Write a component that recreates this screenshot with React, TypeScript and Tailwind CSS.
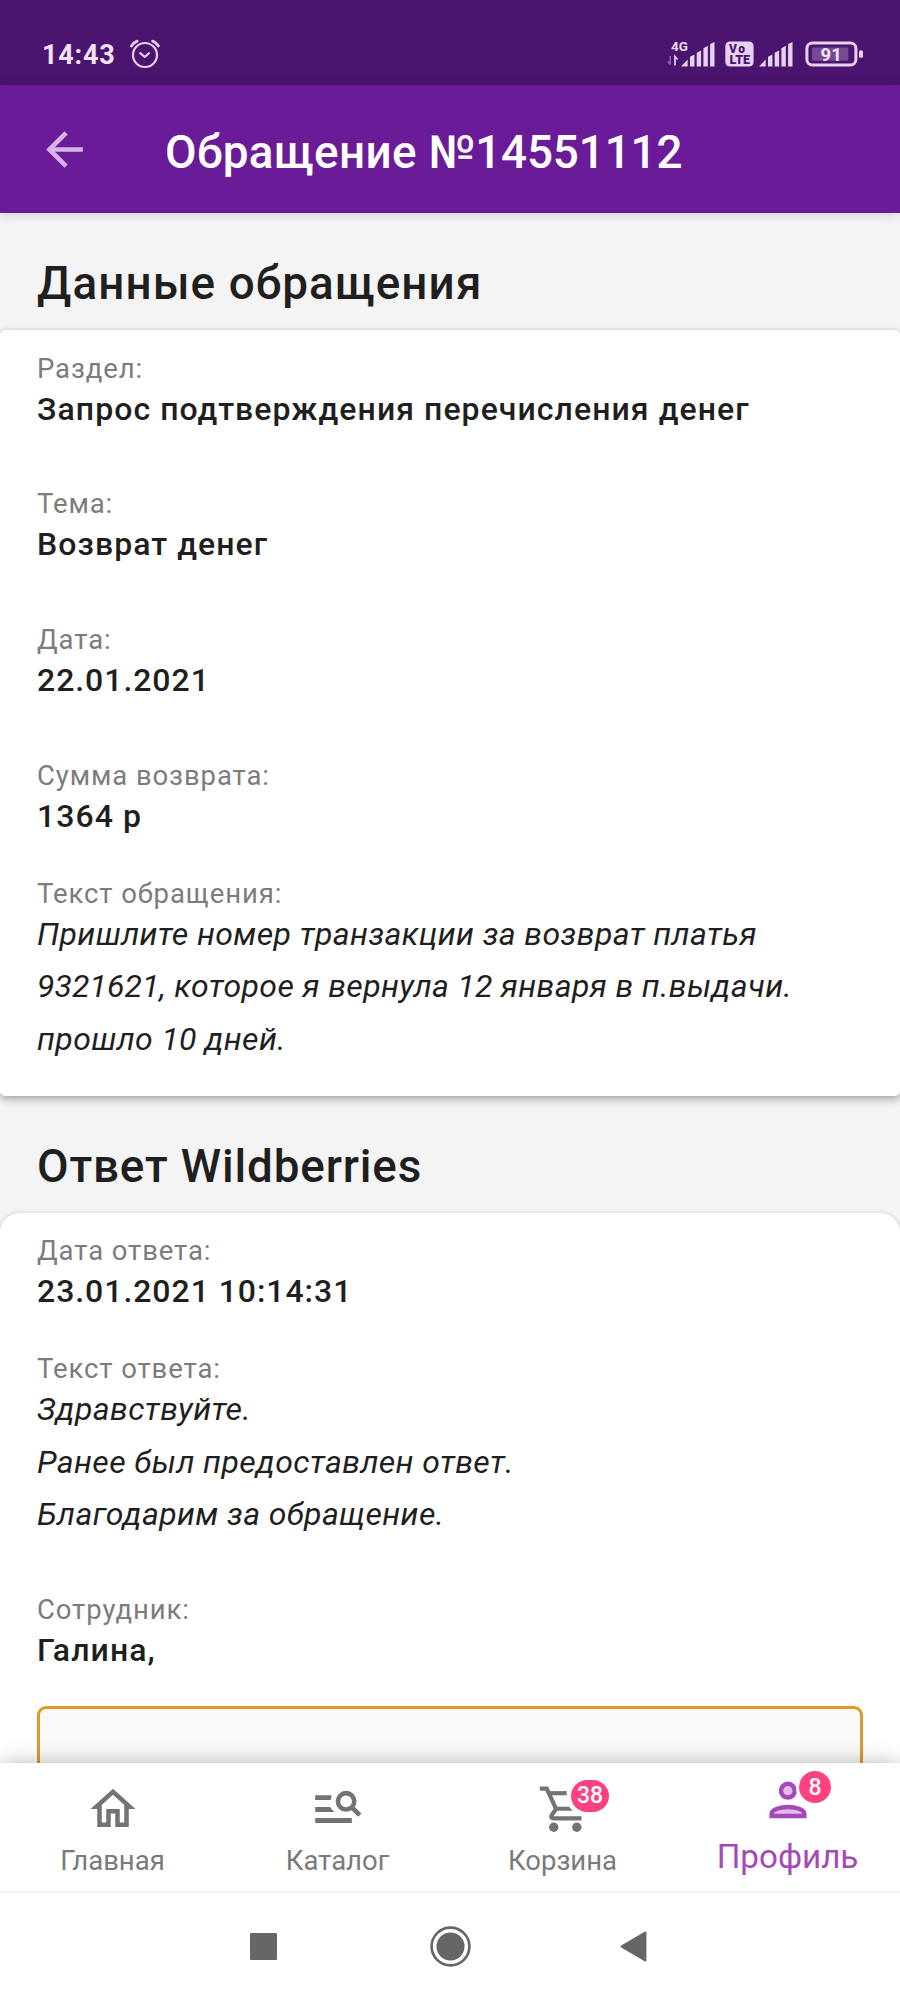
import type { ReactNode } from "react";

function SignalBars() {
  return (
    <g fill="#e6d2f0">
      <path d="M0 24.5 L6.7 17.5 V24.5 Z" />
      <path d="M9 24.5 V14.8 L13.4 12.6 V24.5 Z" />
      <path d="M15.7 24.5 V10.8 L20.1 8.4 V24.5 Z" />
      <path d="M22.4 24.5 V6.3 L26.8 3.8 V24.5 Z" />
      <path d="M29.1 24.5 V2 L33.5 0 V24.5 Z" />
    </g>
  );
}

function StatusBar() {
  return (
    <div className="flex h-[85px] shrink-0 items-end justify-between bg-[#4b146f] pr-[36px] pl-[42px]">
      <div className="flex h-[62px] items-center gap-[13px]">
        <span className="mt-px text-[27px] leading-[32px] font-bold tracking-[0.8px] text-[#f3e4fa]">14:43</span>
        <svg width="32" height="32" viewBox="0 0 32 32" fill="none" stroke="#e6cff2" strokeWidth="2.2" strokeLinecap="round" strokeLinejoin="round">
          <circle cx="16" cy="17" r="12" />
          <path d="M11.3 15.2 L15.7 19 L20 15.2" />
          <path d="M2.4 8 Q4.5 4.6 8.2 3.1 M29.4 8 Q27.4 4.6 23.6 3.1" strokeWidth="2.8" />
        </svg>
      </div>
      <div className="flex h-[62px] items-center">
        <svg width="48" height="36" viewBox="0 -4 48 36">
          <text x="4" y="10.5" fontSize="13.5" fontWeight="700" fill="#ecdaf5">4G</text>
          <path d="M3.2 16 V24.5 M3.2 24.5 L0.8 21.6" stroke="#8b62a8" strokeWidth="1.6" fill="none" />
          <path d="M8 25.5 V16.5 L10.6 19.5" stroke="#e6d2f0" strokeWidth="1.7" fill="none" />
          <g transform="translate(14 2)"><SignalBars /></g>
        </svg>
        <svg className="ml-[10px]" width="29" height="28" viewBox="0 0 29 28">
          <rect x="0.3" y="1.5" width="28.3" height="25" rx="4.5" fill="#e6d2f0" />
          <text x="4" y="12.6" fontSize="12" fontWeight="900" fill="#4b146f" textLength="16">Vo</text>
          <text x="4.6" y="23.6" fontSize="12" fontWeight="900" fill="#4b146f" textLength="20.5" lengthAdjust="spacingAndGlyphs">LTE</text>
        </svg>
        <svg className="ml-[5px]" width="34" height="28" viewBox="0 0 34 28">
          <g transform="translate(0 2)"><SignalBars /></g>
        </svg>
        <svg className="ml-[12px]" width="59" height="28" viewBox="0 0 59 28">
          <rect x="1.9" y="3" width="49" height="22" rx="5.5" fill="none" stroke="#e6d2f0" strokeWidth="3" />
          <rect x="7" y="7.4" width="36.3" height="13.4" rx="1" fill="#774a94" />
          <rect x="54" y="10.2" width="4" height="7.6" rx="1.6" fill="#e6d2f0" />
          <text x="26.2" y="20.8" fontSize="18.5" fontWeight="700" fill="#f3e4fa" textAnchor="middle">91</text>
        </svg>
      </div>
    </div>
  );
}

function AppBar() {
  return (
    <header className="relative z-10 flex h-[128px] shrink-0 items-center bg-[#6a1b98] pl-[37px] shadow-[0_1px_12px_rgba(0,0,0,0.16)]">
      <svg width="55" height="55" viewBox="0 0 24 24" fill="#d6b4e9">
        <path d="M20 11H7.83l5.59-5.59L12 4l-8 8 8 8 1.41-1.41L7.83 13H20v-2z" />
      </svg>
      <h1 className="mt-[8px] ml-[73px] text-[45.8px] leading-[54px] font-medium tracking-[0.38px] whitespace-nowrap text-white">
        Обращение <span className="tracking-[-0.15px]">№14551112</span>
      </h1>
    </header>
  );
}

function Heading({ children }: { children: ReactNode }) {
  return <h2 className="pl-[37px] text-[45.8px] leading-[54px] font-medium whitespace-nowrap text-[#1f1f1f]">{children}</h2>;
}

function Label({ children }: { children: ReactNode }) {
  return <div className="text-[27.5px] leading-[29px] tracking-[0.9px] text-[#7c7c7c]">{children}</div>;
}

function Field({ label, children, numeric }: { label: string; children: ReactNode; numeric?: boolean }) {
  return (
    <div>
      <Label>{label}</Label>
      <div
        className={
          numeric
            ? "text-[32px] leading-[52.6px] font-medium tracking-[0.95px] whitespace-nowrap text-[#1f1f1f]"
            : "text-[32px] leading-[52.6px] font-medium tracking-[1.06px] whitespace-nowrap text-[#1f1f1f]"
        }
      >
        {children}
      </div>
    </div>
  );
}

function Message({ label, lines }: { label: string; lines: string[] }) {
  return (
    <div>
      <Label>{label}</Label>
      {lines.map((line) => (
        <p key={line} className="text-[32px] leading-[52.6px] tracking-[0.39px] whitespace-nowrap text-[#1f1f1f] italic">
          {line.split(/(\d+)/).map((part, i) =>
            /^\d+$/.test(part) ? (
              <span key={i} className="tracking-[0.05px]">{part}</span>
            ) : (
              part
            ),
          )}
        </p>
      ))}
    </div>
  );
}

function HomeIcon() {
  return (
    <svg width="54" height="54" viewBox="0 0 24 24" fill="#737373">
      <path d="M12 5.69l5 4.5V18h-2v-6H9v6H7v-7.81l5-4.5M12 3L2 12h3v8h6v-6h2v6h6v-8h3L12 3z" />
    </svg>
  );
}

function CatalogIcon() {
  return (
    <svg width="54" height="54" viewBox="310.5 1782 54 54">
      <path fill="#737373" d="M314.7 1795.3H331.2L330.2 1800H314.7ZM314.7 1807H329.7Q331.4 1810.3 334.3 1812H314.7ZM314.7 1818H351.3V1823H314.7Z" />
      <g fill="none" stroke="#737373" strokeWidth="4.6">
        <circle cx="345.6" cy="1801.3" r="8.2" />
        <path d="M351 1807 L359.3 1815.2" />
      </g>
    </svg>
  );
}

function CartIcon() {
  return (
    <svg width="54" height="54" viewBox="535.5 1782 54 54">
      <g fill="none" stroke="#737373" strokeWidth="4.2">
        <path d="M539.3 1788.7H546.2L555.6 1808.9" />
        <path d="M548.5 1793.2H566.2" />
        <path d="M556 1808.6L551.2 1815.2Q549.7 1818.3 553.4 1818.3H581" />
      </g>
      <path fill="#737373" d="M556 1806.7H568.8Q570.2 1809 572.4 1810.8H556Z" />
      <circle cx="553.3" cy="1827.3" r="4.7" fill="#737373" />
      <circle cx="576.3" cy="1827.3" r="4.7" fill="#737373" />
    </svg>
  );
}

function ProfileIcon() {
  return (
    <svg width="54" height="54" viewBox="760.5 1778 54 54">
      <circle cx="787.4" cy="1790.7" r="6.9" fill="#dfbde7" stroke="#a649b8" strokeWidth="4.5" />
      <path d="M771.2 1816V1813.5C771.2 1809.5 780 1807 787.5 1807S803.8 1809.5 803.8 1813.5V1816Z" fill="#dfbde7" stroke="#a649b8" strokeWidth="4.5" />
      <circle cx="815" cy="1786.7" r="19.6" fill="#fff" />
    </svg>
  );
}

function Tab({ icon, label, badge, active }: { icon: ReactNode; label: string; badge?: string; active?: boolean }) {
  return (
    <div className={active ? "flex flex-1 flex-col items-center pt-[15px]" : "flex flex-1 flex-col items-center pt-[19px]"}>
      <div className="relative">
        {icon}
        {badge && (
          <span
            className={
              active
                ? "absolute -top-[7px] left-[38.5px] flex size-[32px] items-center justify-center rounded-full bg-[#ff4081] text-[23px] leading-none font-medium text-white"
                : "absolute -top-[2.5px] left-[35.5px] flex h-[32px] w-[38px] items-center justify-center rounded-full bg-[#ff4081] text-[23px] leading-none font-medium text-white"
            }
          >
            {badge}
          </span>
        )}
      </div>
      <span className={active ? "mt-[6px] text-[33.2px] leading-[38px] text-[#a649b8]" : "mt-[9px] text-[27.5px] leading-[32px] text-[#7a7a7a]"}>{label}</span>
    </div>
  );
}

function SystemNav() {
  return (
    <div className="flex h-[109px] items-center border-t-2 border-[#f3f3f3] pl-[250px]">
      <svg width="27" height="27" viewBox="0 0 27 27"><rect width="27" height="27" rx="1.2" fill="#666" /></svg>
      <svg className="ml-[152.5px]" width="41" height="41" viewBox="0 0 41 41">
        <circle cx="20.5" cy="20.5" r="18.9" fill="none" stroke="#666" strokeWidth="2.6" />
        <circle cx="20.5" cy="20.5" r="14" fill="#666" />
      </svg>
      <svg className="ml-[149.5px]" width="27" height="31" viewBox="0 0 27 31">
        <path d="M25.2 1.8V29.2L1.8 15.5Z" fill="#666" stroke="#666" strokeWidth="2.4" strokeLinejoin="round" />
      </svg>
    </div>
  );
}

export default function App() {
  return (
    <div className="flex h-[2000px] w-[900px] flex-col overflow-hidden bg-[#f4f4f4] font-['Roboto',sans-serif]">
      <StatusBar />
      <AppBar />
      <main className="min-h-0 flex-1 overflow-hidden pt-[44px]">
        <div className="tracking-[1.1px]">
          <Heading>Данные обращения</Heading>
        </div>
        <section className="mt-[19px] rounded-[5px] bg-white px-[37px] pt-[23.7px] pb-[30.5px] shadow-[0_4px_8px_rgba(0,0,0,0.28),0_0_4px_rgba(0,0,0,0.12)]">
          <div className="flex flex-col gap-[54.2px]">
            <Field label="Раздел:">Запрос подтверждения перечисления денег</Field>
            <Field label="Тема:">Возврат денег</Field>
            <Field label="Дата:" numeric>22.01.2021</Field>
            <Field label="Сумма возврата:">1364 р</Field>
          </div>
          <div className="mt-[35.9px]">
            <Message
              label="Текст обращения:"
              lines={["Пришлите номер транзакции за возврат платья", "9321621, которое я вернула 12 января в п.выдачи.", "прошло 10 дней."]}
            />
          </div>
        </section>
        <div className="mt-[44.4px] tracking-[0.85px]">
          <Heading>Ответ Wildberries</Heading>
        </div>
        <section className="mt-[18.6px] rounded-t-[20px] bg-white px-[37px] pt-[23.7px] shadow-[0_0_5px_rgba(0,0,0,0.16)]">
          <Field label="Дата ответа:" numeric>23.01.2021 10:14:31</Field>
          <div className="mt-[36.1px]">
            <Message label="Текст ответа:" lines={["Здравствуйте.", "Ранее был предоставлен ответ.", "Благодарим за обращение."]} />
          </div>
          <div className="mt-[54.2px]">
            <Field label="Сотрудник:">Галина,</Field>
          </div>
          <div className="mt-[29.6px] h-[130px] rounded-[9px] border-3 border-[#e0982f] bg-[#fafafa]" />
        </section>
      </main>
      <footer className="relative z-10 shrink-0 bg-white shadow-[0_0_20px_rgba(0,0,0,0.28)]">
        <nav className="flex h-[128px]">
          <Tab icon={<HomeIcon />} label="Главная" />
          <Tab icon={<CatalogIcon />} label="Каталог" />
          <Tab icon={<CartIcon />} label="Корзина" badge="38" />
          <Tab icon={<ProfileIcon />} label="Профиль" badge="8" active />
        </nav>
        <SystemNav />
      </footer>
    </div>
  );
}
